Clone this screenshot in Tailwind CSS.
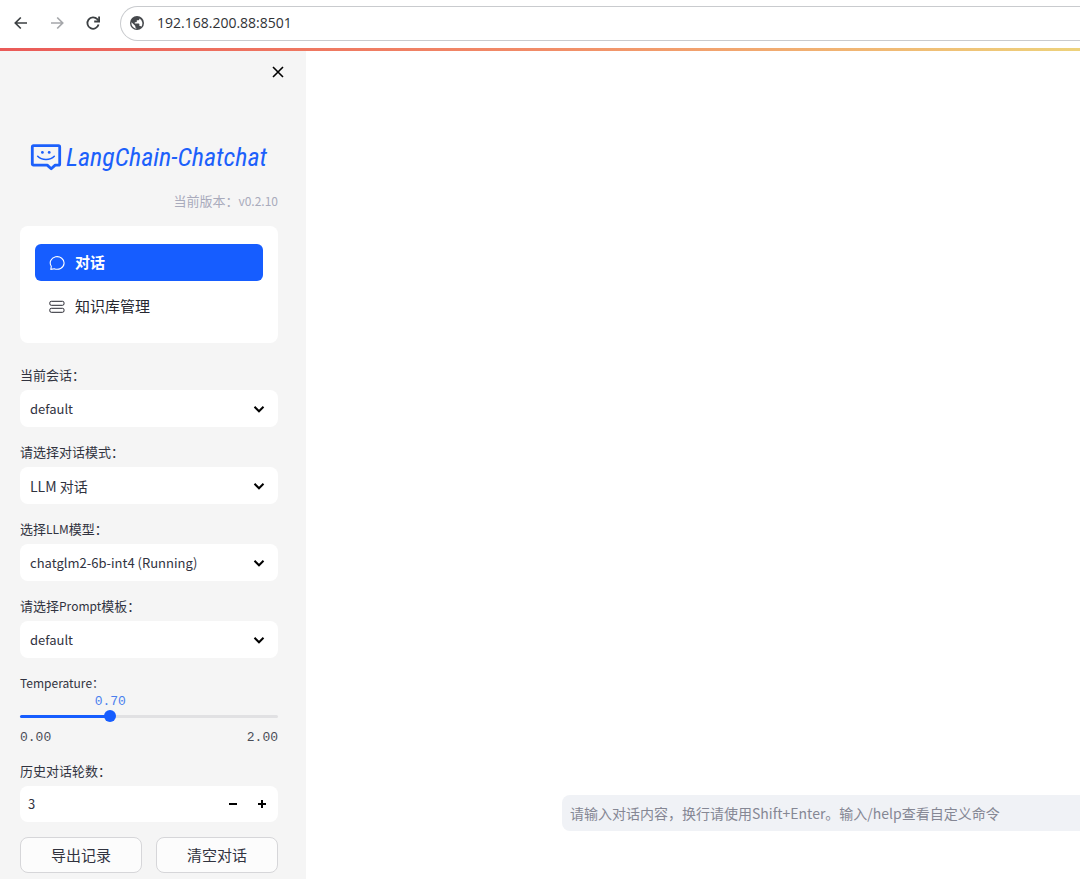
<!DOCTYPE html>
<html lang="zh-CN">
  <head>
    <meta charset="UTF-8" />
    <meta name="viewport" content="width=device-width, initial-scale=1.0" />
    <title>LangChain-Chatchat WebUI</title>
    <script src="https://cdn.jsdelivr.net/npm/@tailwindcss/browser@4"></script>
  </head>
  <body class="flex min-h-screen flex-col overflow-x-hidden bg-white font-['Noto_Sans_CJK_SC',sans-serif] text-[#31333f]">
    <!-- browser toolbar -->
    <header class="flex h-12 items-center pb-0.5">
      <nav class="flex flex-none items-center gap-5 pr-4 pl-[13px]" aria-label="浏览器">
        <button type="button" aria-label="后退" class="text-[#3c4043]">
          <svg class="size-4" viewBox="0 0 16 16" fill="none" stroke="currentColor" stroke-width="1.7"><path d="M14 8H2.500M7.800 2.500 2.300 8l5.500 5.500" /></svg>
        </button>
        <button type="button" aria-label="前进" class="text-[#a5a7aa]">
          <svg class="size-4" viewBox="0 0 16 16" fill="none" stroke="currentColor" stroke-width="1.7"><path d="M2 8h11.500M8.200 2.500 13.700 8l-5.500 5.500" /></svg>
        </button>
        <button type="button" aria-label="重新加载" class="text-[#3c4043]">
          <svg class="size-4" viewBox="0 0 16 16" fill="none" stroke="currentColor" stroke-width="1.800"><path d="M13.600 9.600A5.700 5.700 0 1 1 12.300 4.200L13.600 5.600" /><path d="M14.100 1.500v5H9.200" /></svg>
        </button>
      </nav>
      <form class="ml-[3px] flex h-[35px] flex-auto items-center gap-3 rounded-l-full border border-r-0 border-[#c9cbce] pl-2">
        <svg class="size-4 flex-none text-[#46494d]" viewBox="0 0 16 16" aria-hidden="true">
          <circle cx="8" cy="8" r="7" fill="currentColor" />
          <path fill="#fff" d="M2.500 7.200 6.300 11v1c0 .6.400 1 1 1.100v.6A5.700 5.700 0 0 1 2.500 7.200ZM12.300 11.800a1.300 1.300 0 0 0-1.300-.9h-.600V9.200c0-.4-.300-.7-.7-.7H5.800V7.200h1.300c.4 0 .7-.300.7-.7V5.300h1.300c.7 0 1.300-.600 1.300-1.300v-.500a5.700 5.700 0 0 1 1.900 8.300Z" />
        </svg>
        <input type="text" aria-label="地址" value="192.168.200.88:8501" class="min-w-0 flex-auto bg-transparent font-['Open_Sans',sans-serif] text-sm text-[#303236] outline-none" />
      </form>
    </header>
    <div class="h-[3px] bg-linear-to-r from-[#ea5a58] via-[#f18c68] to-[#edd27c]"></div>

    <div class="flex flex-auto">
      <!-- sidebar -->
      <aside class="flex w-[306px] flex-none flex-col bg-[#f5f5f5] pt-[9px] pr-7 pb-1 pl-5">
        <button type="button" aria-label="关闭" class="-mr-3 flex size-6 items-center justify-center self-end text-black">
          <svg class="size-3" viewBox="0 0 12 12" fill="none" stroke="currentColor" stroke-width="1.600"><path d="m1 1 10 10M11 1 1 11" /></svg>
        </button>

        <h1 class="mt-[57px] flex items-center gap-1 pl-2.5 text-[#1c60fb]">
          <svg class="h-7 w-8 flex-none" viewBox="0 0 32 28" fill="none" stroke="currentColor" stroke-linejoin="round" stroke-linecap="round" aria-hidden="true">
            <path stroke-width="2.800" d="M3.500 2.700h25q1.200 0 1.200 1.200v17q0 1.200-1.200 1.200h-3.300l-4 3.600-4-3.600H3.500q-1.200 0-1.200-1.200V3.900q0-1.200 1.200-1.200Z" />
            <path stroke-width="1.600" d="M7.700 13.300c4 4.300 12.600 4.300 16.600 0" />
            <circle cx="12.400" cy="9.400" r="1.400" fill="currentColor" stroke="none" />
            <circle cx="19.200" cy="9.400" r="1.400" fill="currentColor" stroke="none" />
          </svg>
          <span class="font-['Roboto_Condensed','Liberation_Sans_Narrow','Roboto',sans-serif] text-[26px] leading-8 italic">LangChain-Chatchat</span>
        </h1>
        <p class="mt-[18px] text-right text-[13px] leading-5 text-[#a9abbc]">当前版本：<span class="text-xs">v0.2.10</span></p>

        <nav class="mt-[15px] flex flex-col gap-[7px] rounded-lg bg-white px-[15px] py-[18px]">
          <a href="#chat" class="flex h-[37px] items-center gap-2.5 rounded-md bg-[#165dff] px-3.5 text-[15px] font-bold text-white">
            <svg class="size-4" viewBox="0 0 16 16" fill="none" stroke="currentColor" stroke-width="1.100" stroke-linejoin="round"><path d="M1.800 14.400 2.300 11.300A6.900 6.300 0 1 1 5.300 13.700Z" /></svg>
            对话
          </a>
          <a href="#knowledge" class="flex h-[37px] items-center gap-2.5 rounded-md px-3.5 text-[15px] text-[#262730]">
            <svg class="size-4" viewBox="0 0 16 16" fill="none" stroke="currentColor" stroke-width="1"><rect x=".8" y="2.300" width="14.200" height="4" rx="1.500" /><rect x=".8" y="9.300" width="14.200" height="4" rx="1.500" /></svg>
            知识库管理
          </a>
        </nav>

        <form class="mt-[22px] flex flex-col gap-[15px]">
          <div class="flex flex-col gap-[5px]">
            <label for="session" class="text-[13px] leading-5">当前会话：</label>
            <div class="relative">
              <select id="session" class="h-[37px] w-full appearance-none rounded-lg bg-white pr-9 pl-2.5 text-[13px]">
                <option>default</option>
              </select>
              <svg class="pointer-events-none absolute top-3 right-3 size-3.5 text-black" viewBox="0 0 14 14" fill="none" stroke="currentColor" stroke-width="2"><path d="m2.500 4.800 4.500 4.500 4.500-4.500" /></svg>
            </div>
          </div>
          <div class="flex flex-col gap-[5px]">
            <label for="mode" class="text-[13px] leading-5">请选择对话模式：</label>
            <div class="relative">
              <select id="mode" class="h-[37px] w-full appearance-none rounded-lg bg-white pr-9 pl-2.5 text-sm">
                <option>LLM 对话</option>
              </select>
              <svg class="pointer-events-none absolute top-3 right-3 size-3.5 text-black" viewBox="0 0 14 14" fill="none" stroke="currentColor" stroke-width="2"><path d="m2.500 4.800 4.500 4.500 4.500-4.500" /></svg>
            </div>
          </div>
          <div class="flex flex-col gap-[5px]">
            <label for="model" class="text-[13px] leading-5">选择<span class="text-xs">LLM</span>模型：</label>
            <div class="relative">
              <select id="model" class="h-[37px] w-full appearance-none rounded-lg bg-white pr-9 pl-2.5 text-[13px]">
                <option>chatglm2-6b-int4 (Running)</option>
              </select>
              <svg class="pointer-events-none absolute top-3 right-3 size-3.5 text-black" viewBox="0 0 14 14" fill="none" stroke="currentColor" stroke-width="2"><path d="m2.500 4.800 4.500 4.500 4.500-4.500" /></svg>
            </div>
          </div>
          <div class="flex flex-col gap-[5px]">
            <label for="prompt" class="text-[13px] leading-5">请选择<span class="text-xs">Prompt</span>模板：</label>
            <div class="relative">
              <select id="prompt" class="h-[37px] w-full appearance-none rounded-lg bg-white pr-9 pl-2.5 text-[13px]">
                <option>default</option>
              </select>
              <svg class="pointer-events-none absolute top-3 right-3 size-3.5 text-black" viewBox="0 0 14 14" fill="none" stroke="currentColor" stroke-width="2"><path d="m2.500 4.800 4.500 4.500 4.500-4.500" /></svg>
            </div>
          </div>

          <!-- temperature slider -->
          <div>
            <label for="temperature" class="block text-xs leading-5">Temperature：</label>
            <div class="relative pt-[17px] font-['Liberation_Mono',monospace] text-[13px] leading-4">
              <output for="temperature" class="absolute top-px -translate-x-1/2 text-[#4a80ee]" style="left: 35%">0.70</output>
              <div class="grid items-center">
                <div class="col-start-1 row-start-1 h-[3px] rounded-full bg-[#e1e1e3]">
                  <div class="h-full rounded-full bg-[#165dff]" style="width: 35%"></div>
                </div>
                <input
                  id="temperature"
                  type="range"
                  min="0"
                  max="2"
                  step="0.05"
                  value="0.7"
                  class="col-start-1 row-start-1 -mx-1.5 h-3 appearance-none bg-transparent [&::-webkit-slider-thumb]:size-3 [&::-webkit-slider-thumb]:appearance-none [&::-webkit-slider-thumb]:rounded-full [&::-webkit-slider-thumb]:bg-[#165dff]"
                />
              </div>
              <div class="mt-2 flex justify-between text-[#4b4d57]">
                <span>0.00</span>
                <span>2.00</span>
              </div>
            </div>
          </div>

          <div class="flex flex-col gap-[5px]">
            <label for="history" class="text-[13px] leading-5">历史对话轮数：</label>
            <div class="flex h-9 items-center rounded-lg bg-white pr-0.5 pl-2">
              <input id="history" type="text" inputmode="numeric" value="3" class="w-0 min-w-0 flex-auto bg-transparent text-[13px] outline-none" />
              <button type="button" aria-label="减少" class="flex h-full w-[29px] items-center justify-center text-black">
                <svg class="size-2.5" viewBox="0 0 10 10" stroke="currentColor" stroke-width="2"><path d="M1 5h8" /></svg>
              </button>
              <button type="button" aria-label="增加" class="flex h-full w-[29px] items-center justify-center text-black">
                <svg class="size-2.5" viewBox="0 0 10 10" stroke="currentColor" stroke-width="2"><path d="M1 5h8M5 1v8" /></svg>
              </button>
            </div>
          </div>

          <div class="grid grid-cols-2 gap-3.5">
            <button type="button" class="h-9 rounded-lg border border-[#d6d6d9] bg-[#fcfcfc] text-[15px]">导出记录</button>
            <button type="button" class="h-9 rounded-lg border border-[#d6d6d9] bg-[#fcfcfc] text-[15px]">清空对话</button>
          </div>
        </form>
      </aside>

      <!-- conversation -->
      <main class="flex min-w-0 flex-auto flex-col justify-end pb-12 pl-64">
        <input
          type="text"
          aria-label="对话内容"
          placeholder="请输入对话内容，换行请使用Shift+Enter。输入/help查看自定义命令"
          class="h-9 w-full rounded-l-lg bg-[#f0f2f6] px-2 text-sm outline-none placeholder:text-[#858794]"
        />
      </main>
    </div>
  </body>
</html>
